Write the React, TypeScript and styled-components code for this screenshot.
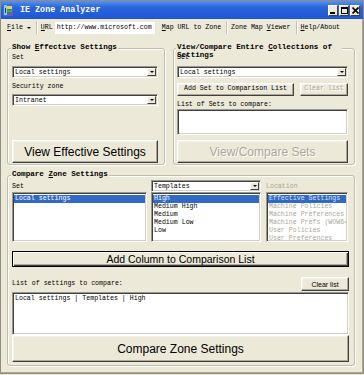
import React from "react";
import styled, { createGlobalStyle } from "styled-components";

const mono = `"Liberation Mono", "DejaVu Sans Mono", monospace`;
const sans = `"Liberation Sans", Arial, sans-serif`;

const GlobalStyle = createGlobalStyle`
  html, body { margin: 0; padding: 0; }
  body { background: #ece9d8; overflow: hidden; }
  * { box-sizing: border-box; }
`;

const Window = styled.div`
  width: 364px;
  height: 374px;
  display: flex;
  flex-direction: column;
  background: #ece9d8;
  border: 1px solid #8f8d82;
  box-shadow: inset -1px -1px #aca899;
  font-family: ${mono};
  font-size: 6.6px;
  color: #000;
`;

const TitleBar = styled.div`
  height: 18px;
  flex-shrink: 0;
  display: flex;
  align-items: center;
  padding: 0 3px 0 2px;
  background: linear-gradient(180deg, #5592f2 0%, #2a64dc 35%, #1f57d0 100%);
`;

const TitleText = styled.span`
  flex: 1;
  margin-left: 7px;
  color: #fff;
  font-weight: bold;
  font-size: 8.4px;
  line-height: 10px;
  white-space: nowrap;
`;

const CaptionButtons = styled.div`
  display: flex;
  gap: 1px;
`;

const CaptionButton = styled.div`
  width: 10px;
  height: 11px;
  background: #ece9d8;
  border: 1px solid;
  border-color: #fff #404040 #404040 #fff;
  display: flex;
  align-items: center;
  justify-content: center;
`;

const Toolbar = styled.div`
  height: 17px;
  flex-shrink: 0;
  display: flex;
  align-items: center;
  padding-left: 6px;
  line-height: 8px;
`;

const ToolText = styled.span<{ $ml?: number }>`
  margin-left: ${(p) => p.$ml ?? 0}px;
  white-space: nowrap;
  display: flex;
  align-items: center;
`;

const DropTri = styled.span`
  display: inline-block;
  margin-left: 4px;
  width: 0;
  height: 0;
  border-left: 2px solid transparent;
  border-right: 2px solid transparent;
  border-top: 2px solid #000;
`;

const ToolSep = styled.span<{ $ml: number }>`
  width: 2px;
  height: 13px;
  margin-left: ${(p) => p.$ml}px;
  border-left: 1px solid #c5c2b2;
  border-right: 1px solid #fff;
`;

const UrlBox = styled.div`
  width: 100px;
  height: 12px;
  margin-left: 2px;
  padding-left: 2px;
  background: #fff;
  display: flex;
  align-items: center;
  white-space: nowrap;
`;

const Main = styled.div`
  flex: 1;
  display: flex;
  flex-direction: column;
  padding: 12px 0 0 6px;
`;

const TopRow = styled.div`
  display: flex;
  gap: 8px;
`;

const Group = styled.div<{ $w: number; $h: number; $pad: string; $mt?: number }>`
  position: relative;
  flex-shrink: 0;
  width: ${(p) => p.$w}px;
  height: ${(p) => p.$h}px;
  margin-top: ${(p) => p.$mt ?? 0}px;
  padding: ${(p) => p.$pad};
  border: 1px solid #c0bdac;
  border-radius: 3px;
  box-shadow: inset 1px 1px #fff, 1px 1px #fff;
  display: flex;
  flex-direction: column;
`;

const GroupTitle = styled.div<{ $left: number; $maxw?: number }>`
  position: absolute;
  top: -6px;
  left: ${(p) => p.$left}px;
  max-width: ${(p) => (p.$maxw ? `${p.$maxw}px` : "none")};
  padding: 0 1px;
  background: #ece9d8;
  font-weight: bold;
  font-size: 7.6px;
  line-height: 8px;
  white-space: ${(p) => (p.$maxw ? "normal" : "nowrap")};
`;

const Label = styled.div<{ $mt?: number; $dim?: boolean }>`
  position: relative;
  flex-shrink: 0;
  margin-top: ${(p) => p.$mt ?? 0}px;
  height: 8px;
  line-height: 8px;
  white-space: nowrap;
  color: ${(p) => (p.$dim ? "#aca899" : "#000")};
`;

const Combo = styled.div<{ $mt?: number }>`
  flex-shrink: 0;
  margin-top: ${(p) => p.$mt ?? 0}px;
  height: 12px;
  display: flex;
  align-items: center;
  justify-content: space-between;
  padding: 1px 1px 1px 2px;
  background: #fff;
  border: 1px solid;
  border-color: #9a988c #fff #fff #9a988c;
  box-shadow: inset 1px 1px #404040, inset -1px -1px #d4d0c8;
  white-space: nowrap;
`;

const ComboArrow = styled.span`
  width: 9px;
  height: 8px;
  background: #ece9d8;
  border: 1px solid;
  border-color: #fff #404040 #404040 #fff;
  display: flex;
  align-items: center;
  justify-content: center;
  &::after {
    content: "";
    border-left: 2px solid transparent;
    border-right: 2px solid transparent;
    border-top: 2px solid #000;
  }
`;

const ListBox = styled.div<{ $h: number; $mt?: number }>`
  flex-shrink: 0;
  margin-top: ${(p) => p.$mt ?? 0}px;
  height: ${(p) => p.$h}px;
  padding: 2px 1px;
  background: #fff;
  border: 1px solid;
  border-color: #9a988c #fff #fff #9a988c;
  box-shadow: inset 1px 1px #404040, inset -1px -1px #d4d0c8;
  overflow: hidden;
`;

const ListRow = styled.div<{ $sel?: boolean; $dim?: boolean }>`
  height: 8px;
  line-height: 8px;
  padding-left: 1px;
  white-space: nowrap;
  overflow: hidden;
  background: ${(p) => (p.$sel ? "#316ac5" : "transparent")};
  color: ${(p) =>
    p.$sel ? (p.$dim ? "#dbe5f6" : "#fff") : p.$dim ? "#aca899" : "#000"};
`;

const PushButton = styled.button<{
  $h: number;
  $fs: number;
  $mono?: boolean;
  $focus?: boolean;
  $w?: number;
  $mt?: number;
}>`
  flex-shrink: 0;
  width: ${(p) => (p.$w ? `${p.$w}px` : "100%")};
  height: ${(p) => p.$h}px;
  margin: ${(p) => p.$mt ?? 0}px 0 0 0;
  padding: 0;
  background: #ece9d8;
  font-family: ${(p) => (p.$mono ? mono : sans)};
  font-size: ${(p) => p.$fs}px;
  line-height: 1;
  color: #000;
  white-space: nowrap;
  border: 1px solid;
  border-color: ${(p) => (p.$focus ? "#000" : "#fff #404040 #404040 #fff")};
  box-shadow: ${(p) =>
    p.$focus
      ? "inset 1px 1px #fff, inset -1px -1px #404040, inset -2px -2px #aca899"
      : "inset -1px -1px #aca899, inset 1px 1px #f4f3ee"};
  &:disabled {
    color: #aca899;
    text-shadow: 1px 1px #fff;
  }
`;

const ButtonRow = styled.div<{ $mt: number; $h: number }>`
  display: flex;
  align-items: center;
  justify-content: space-between;
  margin-top: ${(p) => p.$mt}px;
  height: ${(p) => p.$h}px;
  flex-shrink: 0;
`;

const ZoneRow = styled.div`
  display: flex;
  height: 62px;
  flex-shrink: 0;
`;

const ZoneCol = styled.div<{ $w: number; $ml?: number }>`
  width: ${(p) => p.$w}px;
  margin-left: ${(p) => p.$ml ?? 0}px;
  display: flex;
  flex-direction: column;
  justify-content: flex-end;
`;

const Spacer = styled.div`
  flex: 1;
`;

const AppIcon = () => (
  <svg width="10" height="12" viewBox="0 0 10 12">
    <rect x="0" y="0" width="10" height="12" fill="#3a6fd6" />
    <rect x="1" y="1" width="3" height="10" fill="#7fd0f0" />
    <rect x="4" y="2" width="5" height="3" fill="#f2d23a" />
    <rect x="4" y="6" width="5" height="2" fill="#3cae3c" />
    <rect x="6" y="9" width="3" height="2" fill="#d83a2a" />
    <rect x="2" y="4" width="1" height="5" fill="#1c3f8c" />
  </svg>
);

const MinGlyph = () => (
  <svg width="6" height="7" viewBox="0 0 6 7">
    <rect x="0" y="5" width="5" height="2" fill="#000" />
  </svg>
);

const MaxGlyph = () => (
  <svg width="7" height="7" viewBox="0 0 7 7">
    <rect x="0.5" y="0.5" width="6" height="6" fill="none" stroke="#000" />
    <rect x="0" y="0" width="7" height="2" fill="#000" />
  </svg>
);

const CloseGlyph = () => (
  <svg width="7" height="7" viewBox="0 0 7 7">
    <path d="M0.5 0.5 L6.5 6.5 M6.5 0.5 L0.5 6.5" stroke="#000" strokeWidth="1.6" />
  </svg>
);

const App = (): JSX.Element => {
  return (
    <>
      <GlobalStyle />
      <Window>
        <TitleBar>
          <AppIcon />
          <TitleText>IE Zone Analyzer</TitleText>
          <CaptionButtons>
            <CaptionButton>
              <MinGlyph />
            </CaptionButton>
            <CaptionButton>
              <MaxGlyph />
            </CaptionButton>
            <CaptionButton>
              <CloseGlyph />
            </CaptionButton>
          </CaptionButtons>
        </TitleBar>

        <Toolbar>
          <ToolText>
            <u>F</u>ile
            <DropTri />
          </ToolText>
          <ToolSep $ml={5} />
          <ToolText $ml={3}>
            <u>U</u>RL
          </ToolText>
          <UrlBox>http://www.microsoft.com</UrlBox>
          <ToolText $ml={7}>
            <u>M</u>ap URL to Zone
          </ToolText>
          <ToolSep $ml={5} />
          <ToolText $ml={3}>
            Zone Map&nbsp;<u>V</u>iewer
          </ToolText>
          <ToolSep $ml={5} />
          <ToolText $ml={3}>
            <u>H</u>elp/About
          </ToolText>
        </Toolbar>

        <Main>
          <TopRow>
            <Group $w={158} $h={117} $pad="5px 6px 1px 4px">
              <GroupTitle $left={3}>
                Show <u>E</u>ffective Settings
              </GroupTitle>
              <Label>Set</Label>
              <Combo $mt={4}>
                Local settings
                <ComboArrow />
              </Combo>
              <Label $mt={5}>Security zone</Label>
              <Combo $mt={3}>
                Intranet
                <ComboArrow />
              </Combo>
              <Spacer />
              <PushButton $h={23} $fs={12}>
                View Effective Settings
              </PushButton>
            </Group>

            <Group $w={182} $h={117} $pad="5px 6px 1px 3px">
              <GroupTitle $left={2} $maxw={166}>
                View/Compare Entire <u>C</u>ollections of Settings
              </GroupTitle>
              <Label>Set</Label>
              <Combo $mt={4}>
                Local settings
                <ComboArrow />
              </Combo>
              <ButtonRow $mt={5} $h={13}>
                <PushButton $h={13} $fs={6.6} $mono $w={117}>
                  Add Set to Comparison List
                </PushButton>
                <PushButton $h={13} $fs={6.6} $mono $w={48} disabled>
                  Clear list
                </PushButton>
              </ButtonRow>
              <Label $mt={5}>List of Sets to compare:</Label>
              <ListBox $h={26} />
              <Spacer />
              <PushButton $h={23} $fs={12} disabled>
                View/Compare Sets
              </PushButton>
            </Group>
          </TopRow>

          <Group $w={348} $h={191} $pad="4px 5px 2px 4px" $mt={10}>
            <GroupTitle $left={3}>
              Compare <u>Z</u>one Settings
            </GroupTitle>
            <ZoneRow>
              <ZoneCol $w={135}>
                <Label>Set</Label>
                <ListBox $h={50} $mt={1}>
                  <ListRow $sel>Local settings</ListRow>
                </ListBox>
              </ZoneCol>
              <ZoneCol $w={110} $ml={4}>
                <Combo>
                  Templates
                  <ComboArrow />
                </Combo>
                <ListBox $h={50}>
                  <ListRow $sel>High</ListRow>
                  <ListRow>Medium High</ListRow>
                  <ListRow>Medium</ListRow>
                  <ListRow>Medium Low</ListRow>
                  <ListRow>Low</ListRow>
                </ListBox>
              </ZoneCol>
              <ZoneCol $w={82} $ml={5}>
                <Label $dim>Location</Label>
                <ListBox $h={50} $mt={1}>
                  <ListRow $sel $dim>Effective Settings</ListRow>
                  <ListRow $dim>Machine Policies</ListRow>
                  <ListRow $dim>Machine Preferences</ListRow>
                  <ListRow $dim>Machine Prefs (WOW64)</ListRow>
                  <ListRow $dim>User Policies</ListRow>
                  <ListRow $dim>User Preferences</ListRow>
                </ListBox>
              </ZoneCol>
            </ZoneRow>

            <PushButton $h={16} $fs={10.5} $focus $mt={9}>
              Add Column to Comparison List
            </PushButton>

            <ButtonRow $mt={10} $h={14}>
              <Label>List of settings to compare:</Label>
              <PushButton $h={14} $fs={7} $w={48}>
                Clear list
              </PushButton>
            </ButtonRow>

            <ListBox $h={43} $mt={1}>
              <ListRow>Local settings | Templates | High</ListRow>
            </ListBox>
            <PushButton $h={27} $fs={12}>
              Compare Zone Settings
            </PushButton>
          </Group>
        </Main>
      </Window>
    </>
  );
};

export default App;
